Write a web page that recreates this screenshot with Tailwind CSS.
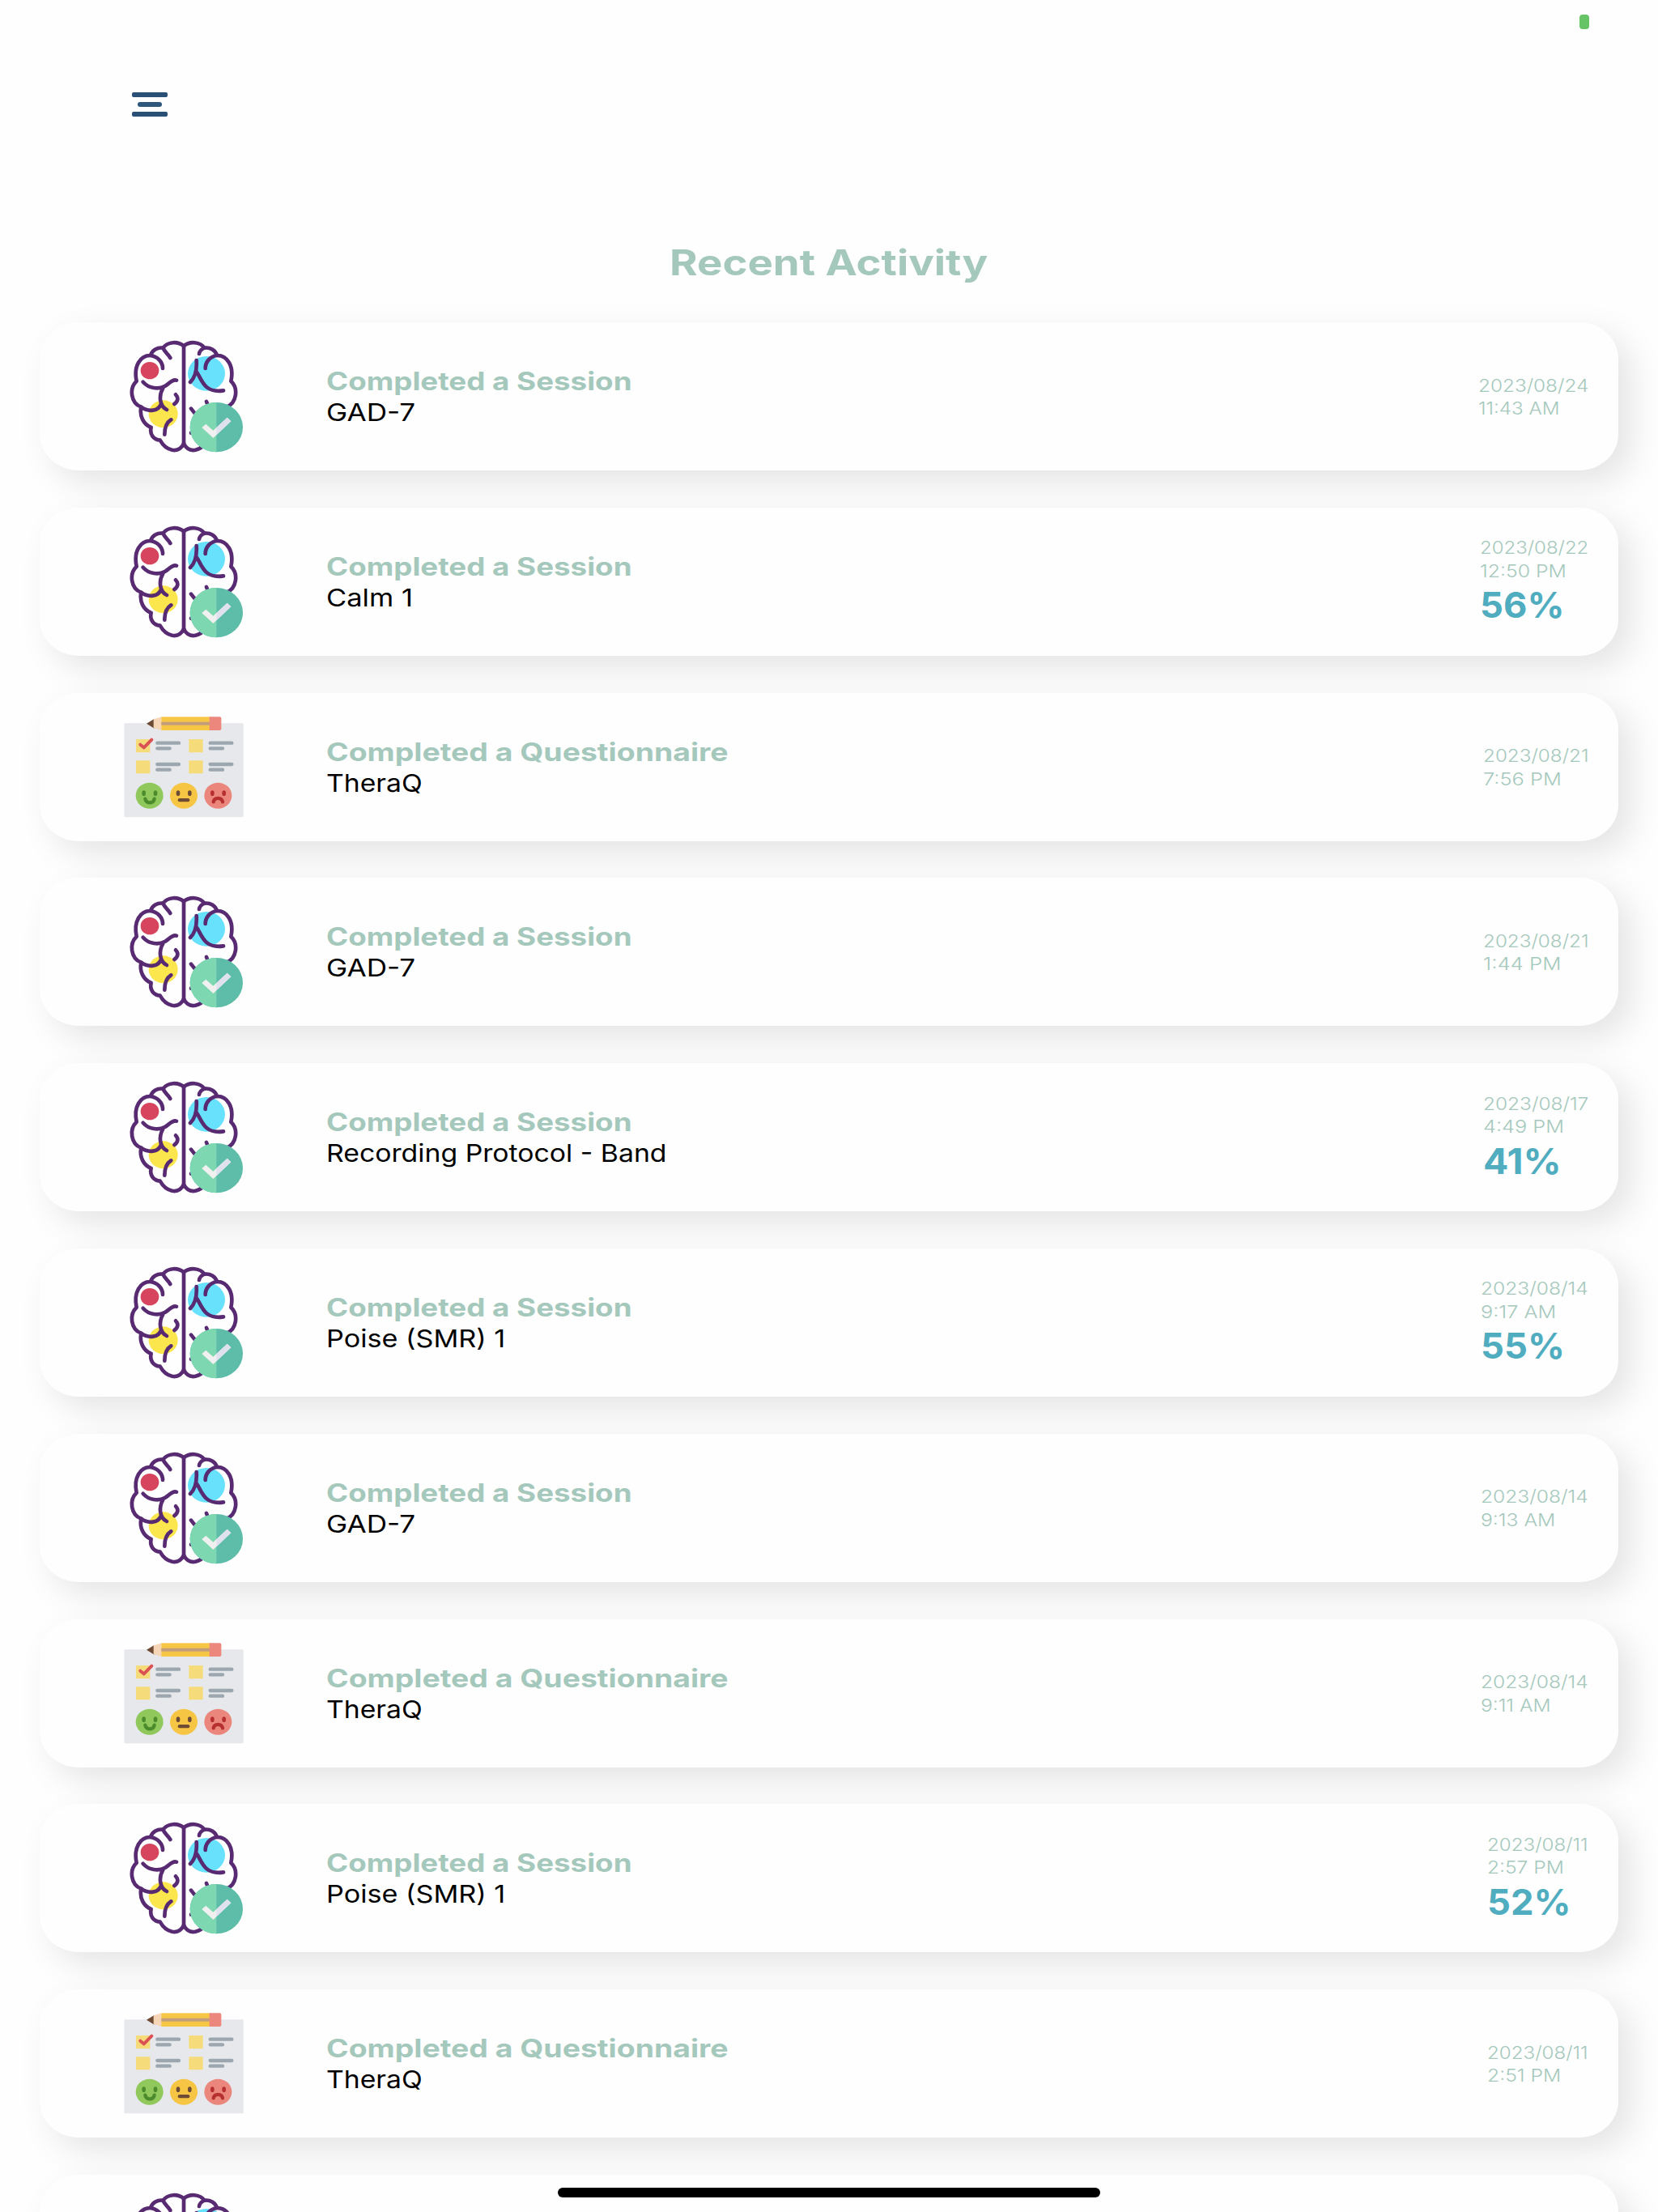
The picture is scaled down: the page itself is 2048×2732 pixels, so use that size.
<!DOCTYPE html>
<html lang="en">
<head>
<meta charset="utf-8">
<title>Recent Activity</title>
<script src="https://cdn.jsdelivr.net/npm/@tailwindcss/browser@4"></script>
</head>
<body class="bg-[#fefefe] font-['Inter',sans-serif]">
<svg class="hidden">
  <symbol id="session" viewBox="0 0 540 540">
    <ellipse cx="135" cy="173" rx="34" ry="32" fill="#d6455d"/>
    <ellipse cx="345" cy="184" rx="69" ry="64" fill="#68e1fd"/>
    <ellipse cx="185" cy="334" rx="54" ry="51" fill="#fbe64d"/>
    <g fill="none" stroke="#582a72" stroke-width="14" stroke-linecap="round" stroke-linejoin="round">
      <path d="M261 82V444"/>
      <path d="M261 82C240 64 202 65 184 89C164 86 143 97 138 117C100 116 74 156 86 212C58 238 64 294 103 308C96 342 112 372 140 384C134 408 148 429 173 431C195 470 240 484 261 444"/>
      <path d="M261 82C282 64 320 65 338 89C358 86 379 97 384 117C422 116 448 156 436 212C464 238 458 294 419 308C426 342 410 372 382 384C388 408 374 429 349 431C327 470 282 484 261 444"/>
      <path d="M184 89C190 105 202 110 211 126M138 117C165 121 183 142 183 165M110 215C132 240 168 244 192 230C208 220 219 205 234 209M184 238C168 265 170 305 198 318M103 308C130 328 168 324 177 296M231 262C243 274 239 288 226 297M214 355C195 367 190 388 190 410"/>
      <path d="M338 89C326 94 319 104 318 111M384 117C357 121 341 142 341 165M308 135C310 168 304 198 285 216M310 180C328 206 336 258 408 247M288 314L304 334M345 288L349 298M288 404L294 404"/>
    </g>
    <ellipse cx="382" cy="383" rx="98" ry="92" fill="#5dbda8"/>
    <path d="M382 291A98 92 0 0 0 382 475Z" fill="#7dd7b0"/>
    <path d="M328 384L343 371L370 395L422 347L436 361L370 423Z" fill="#f0f0f0"/>
    <path d="M382 384L422 347L436 361L382 412Z" fill="#dfe1ee"/>
  </symbol>
  <symbol id="questionnaire" viewBox="0 -37 540 540">
    <rect x="40" y="69" width="442" height="348" rx="4" fill="#e6e8ec"/>
    <path d="M123 70L152 52V88Z" fill="#6d4a33"/>
    <path d="M149 54L179 45V95L149 86Z" fill="#f7d6b8"/>
    <rect x="178" y="45" width="180" height="50" fill="#f6c644"/>
    <rect x="178" y="64" width="180" height="12" fill="#c39e7c"/>
    <path d="M356 45H394Q400 45 400 51V89Q400 95 394 95H356Z" fill="#ec877d"/>
    <g fill="#f5db79">
      <rect x="84" y="128" width="52" height="49" rx="2"/><rect x="280" y="128" width="52" height="49" rx="2"/>
      <rect x="84" y="207" width="52" height="48" rx="2"/><rect x="280" y="207" width="52" height="48" rx="2"/>
    </g>
    <g stroke="#9ca6af" stroke-width="13" stroke-linecap="round">
      <path d="M163 142H243M163 162H209M163 221H243M163 241H209M359 142H439M359 162H405M359 221H439M359 241H405"/>
    </g>
    <path d="M100 148L113 159L142 130" fill="none" stroke="#db5255" stroke-width="12" stroke-linecap="round" stroke-linejoin="round"/>
    <ellipse cx="134" cy="337" rx="51" ry="48" fill="#91c85b"/>
    <ellipse cx="261" cy="337" rx="51" ry="48" fill="#f7c544"/>
    <ellipse cx="388" cy="337" rx="51" ry="48" fill="#eb867c"/>
    <g fill="#4b8b2c"><ellipse cx="113" cy="328" rx="7" ry="10"/><ellipse cx="156" cy="328" rx="7" ry="10"/></g>
    <g fill="#6d4b35"><ellipse cx="240" cy="328" rx="7" ry="10"/><ellipse cx="283" cy="328" rx="7" ry="10"/><rect x="239" y="347" width="44" height="13" rx="6"/></g>
    <g fill="#b5302f"><ellipse cx="367" cy="328" rx="7" ry="10"/><ellipse cx="410" cy="328" rx="7" ry="10"/></g>
    <g fill="none" stroke-width="13" stroke-linecap="round">
      <path d="M118 349C121 368 149 368 152 349" stroke="#4b8b2c"/>
      <path d="M371 360C375 342 401 342 405 360" stroke="#b5302f"/>
    </g>
  </symbol>
</svg>

<div class="relative h-[2732px] w-[2048px] overflow-hidden">
<header class="h-[398px]">
  <div class="flex h-[292px] items-start justify-between pr-[85px] pl-[163px]">
    <button class="mt-[114px] flex w-[44px] flex-col items-center gap-[6px]" aria-label="Menu">
      <span class="h-[6px] w-[44px] rounded-[2px] bg-[#2a5076]"></span>
      <span class="h-[6px] w-[30px] rounded-full bg-[#2f577b]"></span>
      <span class="h-[6px] w-[44px] rounded-[2px] bg-[#2a5076]"></span>
    </button>
    <span class="mt-[18px] h-[18px] w-[12px] rounded-[4px] bg-[#67c466]"></span>
  </div>
  <h1 class="flex h-[64px] pl-[827px] text-[44px] leading-[64px] font-bold text-[#a5c8bc]"><span class="inline-block origin-left whitespace-nowrap" data-w="393">Recent Activity</span></h1>
</header>

<main id="list" class="flex flex-col gap-[45.8px] px-[49px]"></main>

<div class="absolute top-[2702px] left-[689px] h-[12px] w-[670px] rounded-full bg-black"></div>
</div>

<script>
// kind, detail, detail width, date, date column width, time, time width, score, score width
const rows = [
  ['s', 'GAD-7', 110, '2023/08/24', 136, '11:43 AM', 101],
  ['s', 'Calm 1', 107, '2023/08/22', 134, '12:50 PM', 107, '56%', 104],
  ['q', 'TheraQ', 119, '2023/08/21', 130, '7:56 PM', 97],
  ['s', 'GAD-7', 110, '2023/08/21', 130, '1:44 PM', 96],
  ['s', 'Recording Protocol - Band', 421, '2023/08/17', 130, '4:49 PM', 100, '41%', 97],
  ['s', 'Poise (SMR) 1', 221, '2023/08/14', 133, '9:17 AM', 93, '55%', 104],
  ['s', 'GAD-7', 110, '2023/08/14', 133, '9:13 AM', 92],
  ['q', 'TheraQ', 119, '2023/08/14', 133, '9:11 AM', 87],
  ['s', 'Poise (SMR) 1', 221, '2023/08/11', 125, '2:57 PM', 95, '52%', 104],
  ['q', 'TheraQ', 119, '2023/08/11', 125, '2:51 PM', 91],
  ['s']
];
const text = (t, w) => `<span class="inline-block origin-left whitespace-nowrap" data-w="${w}">${t}</span>`;
document.getElementById('list').innerHTML = rows.map(([k, d, dw, date, cw, time, tw, pct, pw]) => `
  <article class="flex h-[183px] shrink-0 items-center rounded-[48px/45px] bg-[#fefefe] pt-px pr-[37px] pl-[91px] shadow-[16px_15px_42px_rgba(0,0,0,0.105)]">
    <svg class="h-[180px] w-[180px] shrink-0"><use href="#${k === 's' ? 'session' : 'questionnaire'}"/></svg>
    ${d ? `<div class="ml-[83px] flex-1 leading-[38px]">
      <h2 class="h-[38px] text-[31px] font-bold text-[#a5c8bc]">${k === 's' ? text('Completed a Session', 378) : text('Completed a Questionnaire', 497)}</h2>
      <p class="h-[38px] text-[30px] text-black">${text(d, dw)}</p>
    </div>
    <div class="text-[22px] leading-[28.5px] font-light text-[#a5c8bc]" style="width:${cw}px">
      <div class="h-[28.5px]">${text(date, cw)}</div>
      <div class="h-[28.5px]">${text(time, tw)}</div>
      ${pct ? `<div class="h-[56px] text-[44px] leading-[56px] font-bold text-[#50adbf]">${text(pct, pw)}</div>` : ''}
    </div>` : ''}
  </article>`).join('');
// Fit each label to its column width, again whenever its own width changes
const fit = e => { if (e.offsetWidth) e.style.transform = `scaleX(${e.dataset.w / e.offsetWidth})`; };
const observer = new ResizeObserver(entries => entries.forEach(({target}) => fit(target)));
document.querySelectorAll('[data-w]').forEach(e => { fit(e); observer.observe(e); });
</script>
</body>
</html>
